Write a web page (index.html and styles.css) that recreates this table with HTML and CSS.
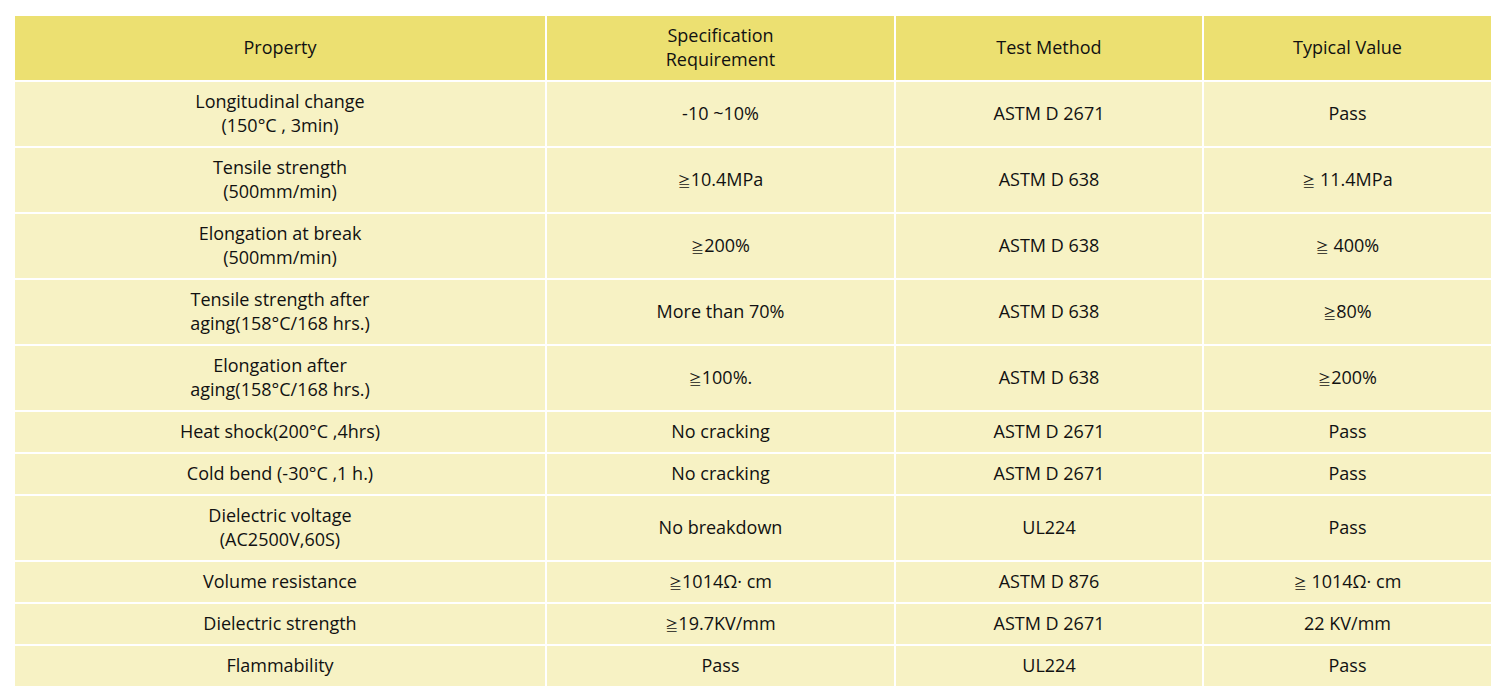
FILE: index.html
```html
<!DOCTYPE html>
<html>
<head>
<meta charset="utf-8">
<link rel="stylesheet" href="styles.css">
</head>
<body>
<table class="spec">
  <colgroup>
    <col class="c1"><col class="c2"><col class="c3"><col class="c4">
  </colgroup>
  <thead>
    <tr><th>Property</th><th>Specification<br>Requirement</th><th>Test Method</th><th>Typical Value</th></tr>
  </thead>
  <tbody>
    <tr><td>Longitudinal change<br>(150°C , 3min)</td><td>-10 ~10%</td><td>ASTM D 2671</td><td>Pass</td></tr>
    <tr><td>Tensile strength<br>(500mm/min)</td><td><span class="ge">≧</span>10.4MPa</td><td>ASTM D 638</td><td><span class="ge">≧</span> 11.4MPa</td></tr>
    <tr><td>Elongation at break<br>(500mm/min)</td><td><span class="ge">≧</span>200%</td><td>ASTM D 638</td><td><span class="ge">≧</span> 400%</td></tr>
    <tr><td>Tensile strength after<br>aging(158°C/168 hrs.)</td><td>More than 70%</td><td>ASTM D 638</td><td><span class="ge">≧</span>80%</td></tr>
    <tr><td>Elongation after<br>aging(158°C/168 hrs.)</td><td><span class="ge">≧</span>100%.</td><td>ASTM D 638</td><td><span class="ge">≧</span>200%</td></tr>
    <tr><td>Heat shock(200°C ,4hrs)</td><td>No cracking</td><td>ASTM D 2671</td><td>Pass</td></tr>
    <tr><td>Cold bend (-30°C ,1 h.)</td><td>No cracking</td><td>ASTM D 2671</td><td>Pass</td></tr>
    <tr><td>Dielectric voltage<br>(AC2500V,60S)</td><td>No breakdown</td><td>UL224</td><td>Pass</td></tr>
    <tr><td>Volume resistance</td><td><span class="ge">≧</span>1014Ω· cm</td><td>ASTM D 876</td><td><span class="ge">≧</span> 1014Ω· cm</td></tr>
    <tr><td>Dielectric strength</td><td><span class="ge">≧</span>19.7KV/mm</td><td>ASTM D 2671</td><td>22 KV/mm</td></tr>
    <tr><td>Flammability</td><td>Pass</td><td>UL224</td><td>Pass</td></tr>
  </tbody>
</table>
</body>
</html>
```

FILE: styles.css
```css
html, body {
  margin: 0;
  padding: 0;
  background: #ffffff;
}
body {
  padding: 14px 0 0 13px;
  font-family: "Open Sans", "Noto Sans", "Noto Sans CJK JP", sans-serif;
  font-size: 18px;
  color: #111111;
}
.spec {
  border-collapse: separate;
  border-spacing: 2px;
  table-layout: fixed;
  width: 1480px;
}
.c1 { width: 530px; }
.c2 { width: 347px; }
.c3 { width: 306px; }
.c4 { width: 287px; }
.spec th,
.spec td {
  padding: 7px 4px 9px;
  height: 24px;
  line-height: 24px;
  text-align: center;
  vertical-align: middle;
  font-weight: 400;
}
.spec th {
  background: #ece071;
}
.spec td {
  background: #f7f2c4;
}
.ge {
  font-size: 13px;
  line-height: 0;
}
```
